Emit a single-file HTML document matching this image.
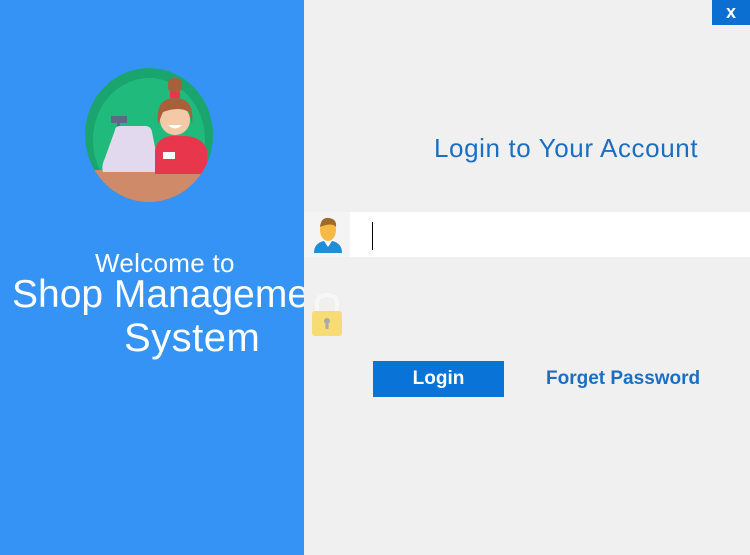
<!DOCTYPE html>
<html><head><style>
body{margin:0;width:750px;height:555px;background:#f0f0f0;position:relative;overflow:hidden;font-family:"Liberation Sans",sans-serif}
.l{position:absolute;left:0;top:0;width:304px;height:555px;background:#3593f6;overflow:hidden}
.t{position:absolute;color:#fff;white-space:nowrap}
</style></head><body>
<div class="l">
<svg style="position:absolute;left:85px;top:68px" width="128" height="134" viewBox="0 0 128 134">
<defs><clipPath id="c"><ellipse cx="64" cy="67" rx="64" ry="67"/></clipPath></defs>
<g clip-path="url(#c)">
<rect width="128" height="134" fill="#1aa56e"/>
<ellipse cx="64" cy="72" rx="56" ry="62" fill="#20bb7c"/>
<rect x="0" y="102" width="128" height="32" fill="#cf8a6a"/>
<rect x="26" y="48" width="16" height="7" fill="#5d6a86"/>
<rect x="32" y="55" width="3" height="8" fill="#5d6a86"/>
<path d="M30 62 Q30 58 36 58 L60 58 Q66 58 67 64 L75 104 L18 104 Q16 98 20 90 Z" fill="#e3d9ef"/>
<path d="M70 82 Q72 70 86 68 L102 68 Q118 70 122 82 L122 106 L70 106 Z" fill="#e8364c"/>
<rect x="78" y="84" width="12" height="7" fill="#fff"/>
<circle cx="90" cy="52" r="15" fill="#f4c9a8"/>
<path d="M73 56 Q70 30 90 30 Q110 30 107 56 L104 44 Q94 38 78 44 Z" fill="#a8603a"/>
<rect x="83" y="10" width="14" height="15" rx="6" fill="#a8603a"/>
<rect x="85" y="24" width="10" height="6" fill="#e8364c"/>
<path d="M83 57 Q90 64 97 57 Z" fill="#fff"/>
</g></svg>
<div class="t" style="left:95px;top:248px;font-size:26px;letter-spacing:0.3px">Welcome to</div>
<div class="t" style="left:12px;top:273px;font-size:39px">Shop Management</div>
<div class="t" style="left:124px;top:316px;font-size:40px;letter-spacing:0.5px">System</div>
</div>
<div style="position:absolute;left:712px;top:0;width:38px;height:25px;background:#0a6fd0;color:#fff;font-size:18px;font-weight:bold;text-align:center;line-height:25px">x</div>
<div style="position:absolute;left:434px;top:133px;font-size:26px;letter-spacing:0.6px;color:#1a6fc2">Login to Your Account</div>
<div style="position:absolute;left:304px;top:212px;width:46px;height:45px;background:#f4f4f4"></div>
<div style="position:absolute;left:350px;top:212px;width:400px;height:45px;background:#fff"></div>
<div style="position:absolute;left:372px;top:222px;width:1px;height:28px;background:#000"></div>
<svg style="position:absolute;left:312px;top:215px" width="32" height="40" viewBox="0 0 32 40">
<path d="M2 38 Q2 28 12 26 L20 26 Q30 28 30 38 Z" fill="#1f8ed8"/>
<path d="M12 26 L16 32 L20 26 Z" fill="#fff"/>
<ellipse cx="16" cy="15" rx="8" ry="11" fill="#f7b946"/>
<path d="M8 12 Q9 2 17 3 Q25 4 24 12 Q20 7 8 12Z" fill="#a06a2a"/>
</svg>
<svg style="position:absolute;left:310px;top:292px" width="34" height="46" viewBox="0 0 34 46">
<path d="M7 20 V12 Q7 3 17 3 Q27 3 27 12 V20" fill="none" stroke="#f7f7f7" stroke-width="4"/>
<rect x="2" y="19" width="30" height="25" rx="3" fill="#f6dc73"/>
<circle cx="17" cy="29" r="3" fill="#aaa"/><rect x="15.5" y="30" width="3" height="7" fill="#aaa"/>
</svg>
<div style="position:absolute;left:373px;top:361px;width:131px;height:36px;background:#0a73d8;color:#fff;font-size:19px;font-weight:bold;text-align:center;line-height:36px">Login</div>
<div style="position:absolute;left:546px;top:368px;font-size:19px;font-weight:bold;color:#1a6fc2">Forget Password</div>
</body></html>
